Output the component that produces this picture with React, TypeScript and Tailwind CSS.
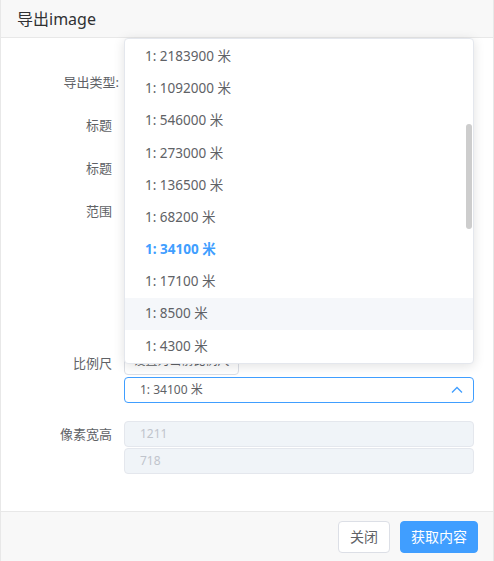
const scales = [
  "2183900",
  "1092000",
  "546000",
  "273000",
  "136500",
  "68200",
  "34100",
  "17100",
  "8500",
  "4300",
];

function Row({ label, children, className = "" }: { label: string; children?: React.ReactNode; className?: string }) {
  return (
    <div className={`flex ${className}`}>
      <div className="w-[123px] shrink-0 pr-3 text-right text-[13px] leading-[36px] text-[#606266]">{label}</div>
      <div className="flex-1">{children}</div>
    </div>
  );
}

export default function App() {
  return (
    <div
      className="relative h-[561px] w-[494px] overflow-hidden border-x border-[#e8e8e8] bg-white"
      style={{ fontFamily: '"Noto Sans", "Noto Sans CJK SC", sans-serif' }}
    >
      <div className="flex h-[38px] items-center border-b border-[#e8e8e8] bg-[#f8f8f8] px-4 text-[16px] text-[#303133]">
        导出image
      </div>

      <div className="h-[473px] pr-[19px] pt-[26px]">
        <Row label="导出类型:" className="h-9 [&>div:first-child]:pr-[5px]" />
        <Row label="标题" className="mt-[7px] h-9" />
        <Row label="标题" className="mt-[7px] h-9" />
        <Row label="范围" className="mt-[7px] h-[145px]" />
        <Row label="比例尺" className="mt-[7px]">
          <div className="pt-[2px]">
            <button className="h-[28px] w-[115px] overflow-hidden whitespace-nowrap rounded border border-[#dcdfe6] bg-white text-[12px] text-[#606266]">
              设置为当前比例尺
            </button>
          </div>
          <div className="mt-[2px] flex h-[26px] items-center justify-between rounded border border-[#409eff] pl-[15px] pr-[10px] text-[12px] text-[#606266]">
            <span>1: 34100 米</span>
            <svg width="12" height="8" viewBox="0 0 12 8" fill="none">
              <polyline points="1,6.5 6,1.5 11,6.5" stroke="#409eff" strokeWidth="1.3" />
            </svg>
          </div>
        </Row>
        <div className="mt-[18px] flex">
          <div className="w-[123px] shrink-0 pr-3 text-right text-[13px] leading-[26px] text-[#606266]">像素宽高</div>
          <div className="flex-1">
            <div className="flex h-[26px] items-center rounded border border-[#e4e7ed] bg-[#f0f4f8] px-[15px] text-[12px] text-[#c0c4cc]">
              1211
            </div>
            <div className="mt-[1px] flex h-[26px] items-center rounded border border-[#e4e7ed] bg-[#f0f4f8] px-[15px] text-[12px] text-[#c0c4cc]">
              718
            </div>
          </div>
        </div>
      </div>

      <div className="flex h-[50px] items-center justify-end gap-[10px] border-t border-[#e8e8e8] bg-[#f8f8f8] pr-[15px]">
        <button className="h-[32px] rounded border border-[#dcdfe6] bg-white px-[11px] text-[14px] text-[#606266]">关闭</button>
        <button className="h-[32px] rounded border border-[#409eff] bg-[#409eff] px-[10px] text-[14px] text-white">获取内容</button>
      </div>

      <div className="absolute left-[123px] top-[38px] h-[326px] w-[350px] overflow-hidden rounded border border-[#e4e7ed] bg-white py-[1px] shadow-[0_2px_12px_0_rgba(0,0,0,0.12)]">
        {scales.map((s) => (
          <div
            key={s}
            className={`flex h-[32.2px] items-center px-5 text-[13.5px] ${
              s === "34100" ? "font-bold text-[#409eff]" : "text-[#606266]"
            } ${s === "8500" ? "bg-[#f5f7fa]" : ""}`}
          >
            1: {s} 米
          </div>
        ))}
        <div className="absolute right-[1px] top-[85px] h-[105px] w-[6px] rounded-full bg-[#cdcdcd]" />
      </div>
    </div>
  );
}
